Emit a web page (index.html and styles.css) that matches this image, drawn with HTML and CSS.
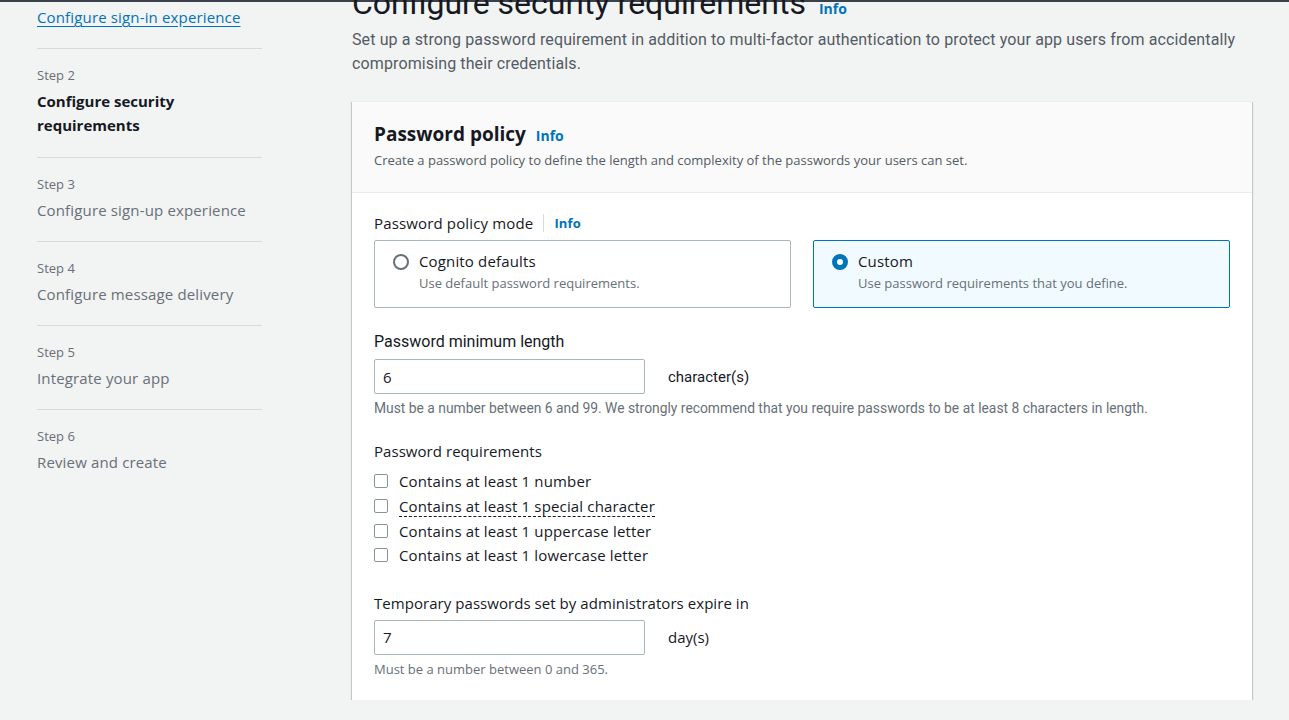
FILE: index.html
```html
<!DOCTYPE html>
<html lang="en">
<head>
    <meta charset="UTF-8">
    <title>Configure security requirements</title>
    <link rel="stylesheet" href="styles.css">
</head>
<body>
<div class="topline"></div>
<div class="layout">
    <nav class="steps">
        <div class="step">
            <div class="step-label">Step 1</div>
            <a href="#" class="step-title link">Configure sign-in experience</a>
        </div>
        <div class="step current">
            <div class="step-label">Step 2</div>
            <div class="step-title active">Configure security requirements</div>
        </div>
        <div class="step">
            <div class="step-label">Step 3</div>
            <div class="step-title">Configure sign-up experience</div>
        </div>
        <div class="step">
            <div class="step-label">Step 4</div>
            <div class="step-title">Configure message delivery</div>
        </div>
        <div class="step">
            <div class="step-label">Step 5</div>
            <div class="step-title">Integrate your app</div>
        </div>
        <div class="step">
            <div class="step-label">Step 6</div>
            <div class="step-title">Review and create</div>
        </div>
    </nav>

    <main class="content">
        <h1 class="page-title">Configure security requirements <a href="#" class="info">Info</a></h1>
        <p class="page-desc">Set up a strong password requirement in addition to multi-factor authentication to protect your app users from accidentally compromising their credentials.</p>

        <section class="panel">
            <div class="panel-head">
                <h2>Password policy <a href="#" class="info">Info</a></h2>
                <p>Create a password policy to define the length and complexity of the passwords your users can set.</p>
            </div>
            <div class="panel-body">
                <div class="field-label mode">Password policy mode <span class="sep"></span><a href="#" class="info">Info</a></div>
                <div class="tiles">
                    <label class="tile">
                        <span class="radio"></span>
                        <span class="tile-text">
                            <span class="tile-title">Cognito defaults</span>
                            <span class="tile-desc">Use default password requirements.</span>
                        </span>
                    </label>
                    <label class="tile selected">
                        <span class="radio checked"></span>
                        <span class="tile-text">
                            <span class="tile-title">Custom</span>
                            <span class="tile-desc">Use password requirements that you define.</span>
                        </span>
                    </label>
                </div>

                <div class="field">
                    <div class="field-label narrow">Password minimum length</div>
                    <div class="input-row">
                        <div class="input">6</div>
                        <span class="unit narrow">character(s)</span>
                    </div>
                    <div class="hint narrow">Must be a number between 6 and 99. We strongly recommend that you require passwords to be at least 8 characters in length.</div>
                </div>

                <div class="field">
                    <div class="field-label">Password requirements</div>
                    <ul class="checks">
                        <li><span class="box"></span>Contains at least 1 number</li>
                        <li><span class="box"></span><span class="dashed">Contains at least 1 special character</span></li>
                        <li><span class="box"></span>Contains at least 1 uppercase letter</li>
                        <li><span class="box"></span>Contains at least 1 lowercase letter</li>
                    </ul>
                </div>

                <div class="field last">
                    <div class="field-label">Temporary passwords set by administrators expire in</div>
                    <div class="input-row">
                        <div class="input">7</div>
                        <span class="unit">day(s)</span>
                    </div>
                    <div class="hint">Must be a number between 0 and 365.</div>
                </div>
            </div>
        </section>
    </main>
</div>
</body>
</html>
```

FILE: styles.css
```css
body {
    margin: 0;
    background-color: #f2f3f3;
    font-family: "Open Sans", "Noto Sans", sans-serif;
    font-size: 14px;
    color: #16191f;
    overflow: hidden;
}
a {
    text-decoration: none;
    color: #0073bb;
}
.topline {
    height: 2px;
    background-color: #3a414a;
}
.layout {
    display: flex;
    gap: 90px;
    padding: 0 37px;
}

/* left side steps */
.steps {
    width: 225px;
    flex-shrink: 0;
    margin-top: -37px;
}
.step {
    padding: 16px 0 19px;
    border-bottom: 1px solid #d5dbdb;
}
.step.current {
    padding-bottom: 20px;
}
.step:last-child {
    border-bottom: none;
}
.step-label {
    font-size: 13px;
    line-height: 20px;
    color: #687078;
}
.step-title {
    margin-top: 4px;
    font-size: 15px;
    line-height: 24px;
    letter-spacing: 0.15px;
    color: #687078;
}
.step-title.link {
    display: inline-block;
    color: #0073bb;
    text-decoration: underline;
    text-underline-offset: 3px;
}
.step-title.active {
    font-weight: 700;
    letter-spacing: 0;
    color: #16191f;
}

/* main */
.content {
    width: 900px;
    margin-top: -19px;
}
.page-title {
    display: flex;
    align-items: flex-start;
    gap: 13px;
    margin: 0;
    font-family: Roboto, "Open Sans", sans-serif;
    font-size: 32px;
    font-weight: 400;
    line-height: 40px;
}
.page-title .info {
    font-family: "Open Sans", sans-serif;
    font-size: 14px;
    line-height: 20px;
    margin-top: 16px;
}
.info {
    font-weight: 700;
    font-size: 13px;
}
.page-desc {
    margin: 5px 0 25px;
    font-family: Roboto, "Open Sans", sans-serif;
    font-size: 16px;
    line-height: 24px;
    letter-spacing: 0.12px;
    color: #545b64;
}

.panel {
    background-color: #fff;
    border-top: 1px solid #eaeded;
    box-shadow: 0 1px 1px 0 rgba(0, 28, 36, 0.3), 1px 1px 1px 0 rgba(0, 28, 36, 0.15), -1px 1px 1px 0 rgba(0, 28, 36, 0.15);
}
.panel-head {
    background-color: #fafafa;
    border-bottom: 1px solid #eaeded;
    padding: 20px 22px 22px;
}
.panel-head h2 {
    margin: 0;
    font-size: 19px;
    line-height: 24px;
}
.panel-head h2 .info {
    font-size: 14px;
    margin-left: 5px;
}
.panel-head p {
    margin: 2px 0 0;
    font-size: 13px;
    line-height: 20px;
    color: #545b64;
}
.panel-body {
    padding: 20px 22px 22px;
}
.field-label {
    display: flex;
    align-items: center;
    font-size: 15px;
    line-height: 20px;
    letter-spacing: 0.05px;
}
.field-label.mode {
    letter-spacing: 0.15px;
}
.field-label.narrow {
    font-family: Roboto, "Open Sans", sans-serif;
    font-size: 16px;
    letter-spacing: 0;
}
.sep {
    width: 1px;
    height: 18px;
    background-color: #d5dbdb;
    margin: 0 10px;
}
.narrow {
    font-family: Roboto, "Open Sans", sans-serif;
}

.tiles {
    display: flex;
    gap: 22px;
    margin-top: 7px;
}
.tile {
    flex: 1;
    display: flex;
    align-items: flex-start;
    gap: 10px;
    padding: 10px 18px 14px;
    border: 1px solid #aab7b8;
    border-radius: 2px;
}
.tile.selected {
    border-color: #0073bb;
    background-color: #f1faff;
}
.radio {
    width: 12px;
    height: 12px;
    margin-top: 3px;
    border: 2px solid #687078;
    border-radius: 50%;
    background-color: #fff;
    flex-shrink: 0;
}
.radio.checked {
    width: 6px;
    height: 6px;
    border: 5px solid #0073bb;
}
.tile-text {
    display: flex;
    flex-direction: column;
}
.tile-title {
    font-size: 15px;
    line-height: 20px;
    letter-spacing: 0.15px;
}
.tile-desc {
    margin-top: 2px;
    font-size: 13px;
    line-height: 20px;
    color: #687078;
}

.field {
    margin-top: 24px;
}
.field.last {
    margin-top: 25px;
}
.input-row {
    display: flex;
    align-items: center;
    gap: 23px;
    margin-top: 7px;
}
.input {
    width: 255px;
    height: 33px;
    padding: 0 6px 0 8px;
    display: flex;
    align-items: center;
    border: 1px solid #aab7b8;
    border-radius: 2px;
    font-size: 15px;
    box-sizing: content-box;
}
.unit {
    font-size: 15px;
}
.hint {
    margin-top: 5px;
    font-size: 13px;
    line-height: 18px;
    color: #687078;
}
.hint.narrow {
    font-size: 13.85px;
}

.checks {
    list-style: none;
    margin: 8px 0 0;
    padding: 0;
}
.checks li {
    display: flex;
    align-items: center;
    gap: 11px;
    height: 24.7px;
    font-size: 15px;
    letter-spacing: 0.15px;
}
.box {
    width: 12px;
    height: 12px;
    border: 1px solid #879596;
    border-radius: 2px;
    background-color: #fff;
}
.dashed {
    border-bottom: 1px dashed #16191f;
    line-height: 20px;
}
```
